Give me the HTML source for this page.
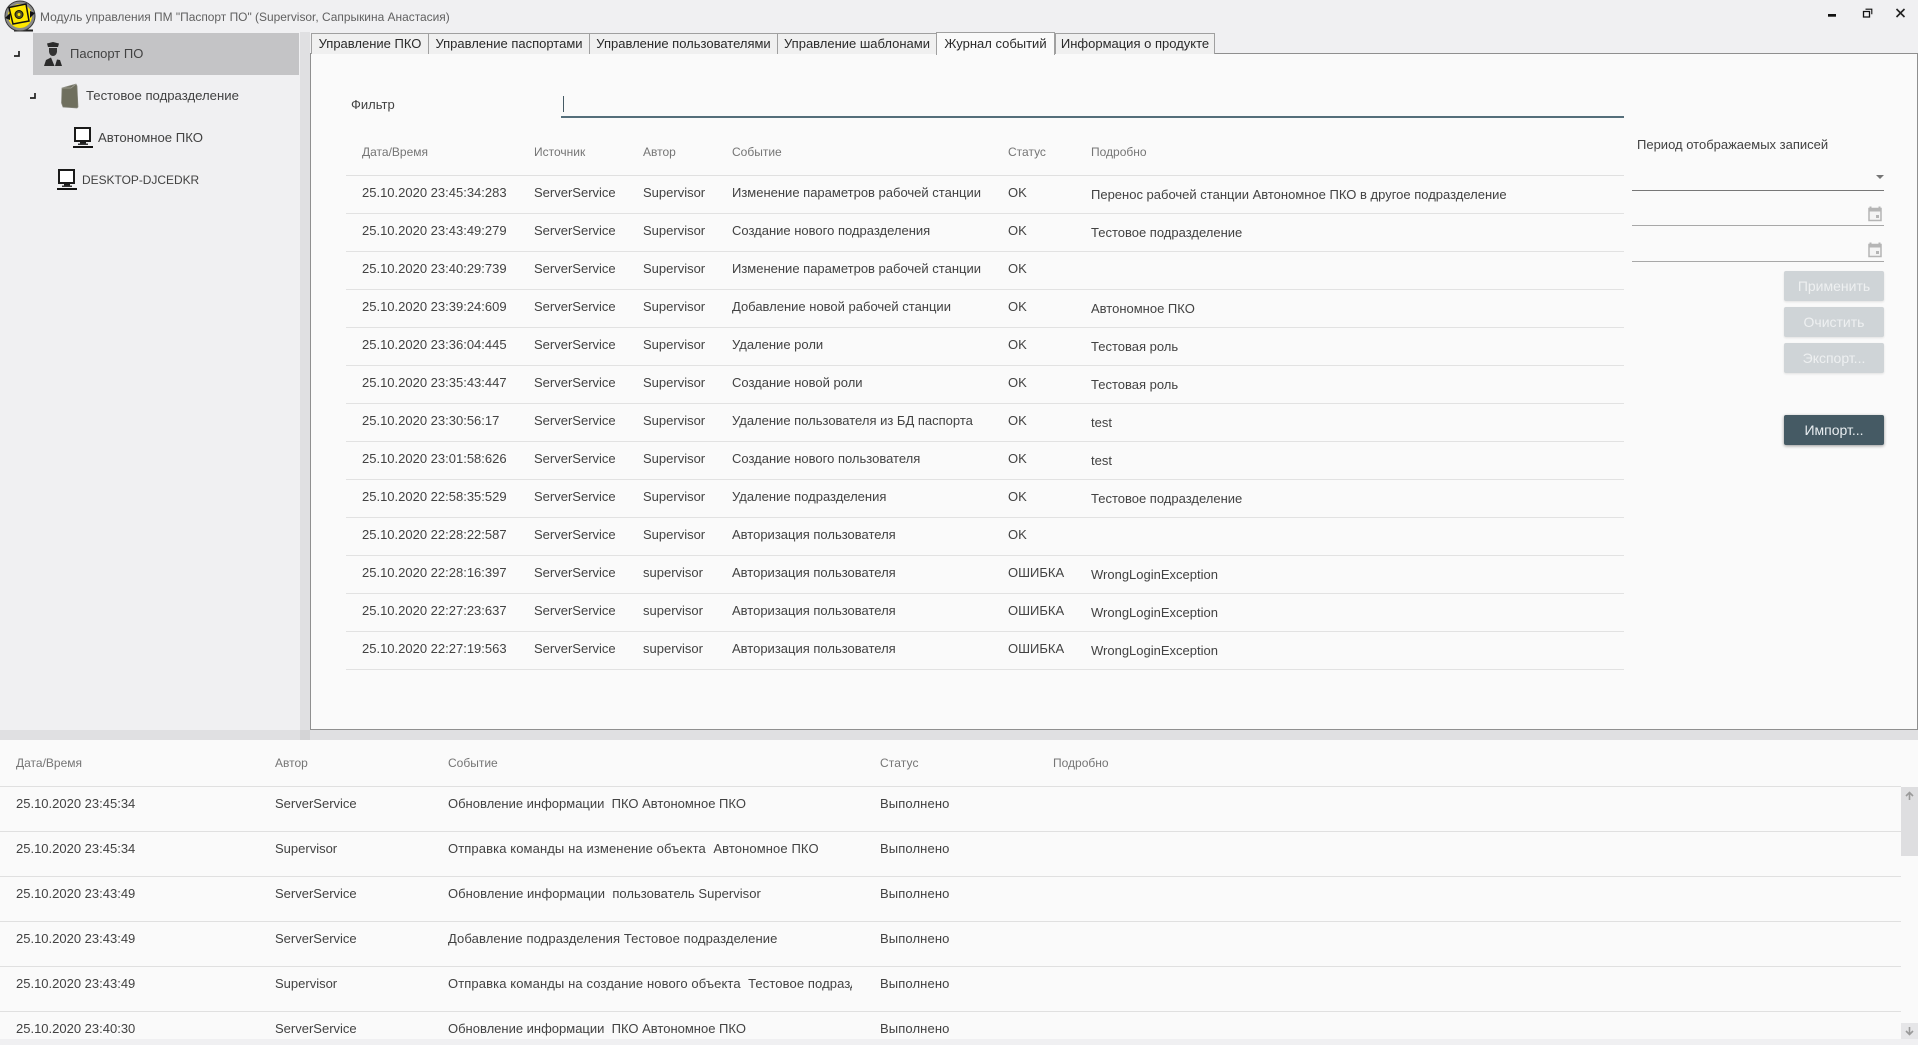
<!DOCTYPE html>
<html lang="ru"><head><meta charset="utf-8"><title>Паспорт ПО</title>
<style>
html,body{margin:0;padding:0}
body{width:1918px;height:1045px;position:relative;overflow:hidden;background:#f0f0f2;font:13px "Liberation Sans",sans-serif;color:#424242}
.a{position:absolute;white-space:nowrap}
.title{left:40px;top:9px;line-height:16px;font-size:11.95px;color:#616161}
.sel{left:33px;top:33px;width:266px;height:42px;background:#c4c4c6}
.tree{font-size:13px;line-height:16px;color:#424242}
.vs{left:300px;top:32px;width:10px;height:698px;background:#e0e0e2}
.hs{left:0;top:730px;width:1918px;height:10px;background:#e0e0e2}
.jn{left:300px;top:730px;width:10px;height:10px;background:#d4d4d6}
.panel{left:310px;top:53px;width:1606px;height:675px;background:#fafafa;border:1px solid #8f8f8f}
.tab{top:33px;height:20px;line-height:19px;text-align:center;background:#f0f0f0;border:1px solid #a0a0a0;border-bottom:0;box-sizing:content-box;font-size:13px;color:#2a2a2a}
.tab.on{top:32px;height:22px;line-height:21px;background:#fafafa;z-index:2}
.r,.h{position:absolute;left:346px;width:1278px;height:38px;border-bottom:1px solid #e2e2e2;box-sizing:border-box}
.r span,.h span,.br span,.bh span{position:absolute;white-space:nowrap;line-height:16px}
.r span{top:9px}
.h{top:130px;height:46px;border-bottom:1px solid #e0e0e0}
.h span{top:14px;font-size:12px;color:#757575}
.c1{left:16px}.c2{left:188px}.c3{left:297px}.c4{left:386px}.c5{left:662px}
.r .c6{left:745px;top:11px}
.h .c6{left:745px}
.bh,.br{position:absolute;left:0;width:1901px;background:#fafafa;box-sizing:border-box;border-bottom:1px solid #e0e0e0}
.bwrap{left:0;top:740px;width:1918px;height:299px;background:#fafafa;overflow:hidden}
.bh{top:0;height:47px}
.bh span{top:15px;font-size:12px;color:#757575}
.br{height:45px}
.br span{top:9px}
.d1{left:16px}.d2{left:275px}.d3{left:448px;max-width:404px;overflow:hidden}.d4{left:880px;letter-spacing:.12px}.d5{left:1053px}
.ls{letter-spacing:.11px}
.btn{left:1784px;width:100px;height:30px;line-height:30px;text-align:center;background:#cfd4d7;color:#eef0f1;border-radius:2px;font-size:14px;box-shadow:0 1px 2px rgba(0,0,0,.1)}
.btn.dark{background:#455a64;color:#e8edf0;box-shadow:0 1px 3px rgba(0,0,0,.4)}
.ln{left:1632px;width:252px;height:1px;background:#a8a8a8}
</style></head><body>

<svg class="a" style="left:3px;top:0" width="34" height="34" viewBox="0 0 34 34">
<path d="M11 30.5 H30" stroke="#222" stroke-width="2"/>
<circle cx="17" cy="16" r="15" fill="#8a8a8a" stroke="#3a3a3a" stroke-width="1"/>
<circle cx="17" cy="16" r="12" fill="#ffe800"/>
<path d="M6 7.5 L23 4 L26 21 L10 24 Z" fill="#ffe800" stroke="#111" stroke-width="1.5"/>
<circle cx="16" cy="14.5" r="4" fill="#5a5a20" stroke="#111"/>
<circle cx="16" cy="14.5" r="1.5" fill="#ffe800"/>
<path d="M2 18 L7 13 L7 20 Z M32 13 L27 18 L27 11 Z" fill="#111"/>
</svg>
<div class="a title">Модуль управления ПМ "Паспорт ПО" (Supervisor, Сапрыкина Анастасия)</div>

<svg class="a" style="left:1826px;top:8px" width="84" height="16" viewBox="0 0 84 16">
<rect x="2" y="6" width="8" height="2.7" fill="#111"/>
<path d="M37.5 3.5 h6 v5.5 h-6 z" fill="none" stroke="#111" stroke-width="1.3"/>
<path d="M39.5 1.2 h6.3 v5" fill="none" stroke="#111" stroke-width="1.1"/>
<path d="M70.5 1 L78.5 9 M78.5 1 L70.5 9" stroke="#222" stroke-width="1.6"/>
</svg>

<div class="a sel"></div>
<svg class="a" style="left:13px;top:48px" width="8" height="10" viewBox="0 0 8 10"><path d="M1 8 H6 V3" fill="none" stroke="#222" stroke-width="1.7"/></svg>
<svg class="a" style="left:29px;top:90px" width="8" height="10" viewBox="0 0 8 10"><path d="M1 8 H6 V3" fill="none" stroke="#222" stroke-width="1.7"/></svg>
<svg class="a" style="left:43px;top:41px" width="20" height="26" viewBox="0 0 20 26">
<path d="M4 2.5 L10 1 L16 2.5 L15 6 H5 Z" fill="#2b2b2b"/>
<path d="M6 7 H14 V11 Q13 15 10 15 Q7 15 6 11 Z" fill="#333"/>
<path d="M1 25 L3 19 L8 16.5 L11.5 25 Z M12 25 L14 18.5 L17 19 L19 25 Z" fill="#2b2b2b"/>
</svg>
<svg class="a" style="left:60px;top:83px" width="20" height="26" viewBox="0 0 20 26">
<path d="M2 5 L16 1 L17 3 L18 24 L17 25 L3 24 L1.5 20 Z" fill="#6f6f5e" stroke="#85857a" stroke-width=".7"/>
<path d="M2 5 L11 5 L16 1" fill="none" stroke="#a5a59a" stroke-width=".8"/>
</svg>
<svg class="a" style="left:73px;top:127px" width="20" height="22" viewBox="0 0 20 22"><use href="#pc"/></svg>
<svg class="a" style="left:57px;top:169px" width="20" height="22" viewBox="0 0 20 22">
<g id="pc"><rect x="2" y="1" width="15" height="13" fill="#fff" stroke="#1a1a1a" stroke-width="2"/><rect x="7" y="15" width="6" height="2" fill="#1a1a1a"/><rect x="5" y="16.5" width="10" height="1.5" fill="#333"/><rect x="0" y="19" width="20" height="2" fill="#111"/></g>
</svg>

<div class="a tree" style="left:70px;top:46px">Паспорт ПО</div>
<div class="a tree" style="left:86px;top:88px;font-size:13.15px">Тестовое подразделение</div>
<div class="a tree" style="left:98px;top:130px;font-size:13.15px">Автономное ПКО</div>
<div class="a tree" style="left:82px;top:172px;font-size:11.95px">DESKTOP-DJCEDKR</div>

<div class="a vs"></div><div class="a hs"></div><div class="a jn"></div>
<div class="a panel"></div>

<div class="a tab" style="left:311px;width:116px">Управление ПКО</div>
<div class="a tab" style="left:428px;width:160px">Управление паспортами</div>
<div class="a tab" style="left:589px;width:187px">Управление пользователями</div>
<div class="a tab" style="left:777px;width:158px">Управление шаблонами</div>
<div class="a tab on" style="left:936px;width:117px">Журнал событий</div>
<div class="a tab" style="left:1055px;width:158px">Информация о продукте</div>

<div class="a" style="left:351px;top:97px;line-height:16px;color:#424242">Фильтр</div>
<div class="a" style="left:563px;top:96px;width:1px;height:16px;background:#455a64"></div>
<div class="a" style="left:561px;top:116px;width:1063px;height:2px;background:#546e7a"></div>

<div class="h"><span class="c1">Дата/Время</span><span class="c2">Источник</span><span class="c3">Автор</span><span class="c4">Событие</span><span class="c5">Статус</span><span class="c6">Подробно</span></div>
<div class="r" style="top:176px"><span class="c1">25.10.2020 23:45:34:283</span><span class="c2">ServerService</span><span class="c3">Supervisor</span><span class="c4">Изменение параметров рабочей станции</span><span class="c5">OK</span><span class="c6">Перенос рабочей станции Автономное ПКО в другое подразделение</span></div>
<div class="r" style="top:214px"><span class="c1">25.10.2020 23:43:49:279</span><span class="c2">ServerService</span><span class="c3">Supervisor</span><span class="c4">Создание нового подразделения</span><span class="c5">OK</span><span class="c6">Тестовое подразделение</span></div>
<div class="r" style="top:252px"><span class="c1">25.10.2020 23:40:29:739</span><span class="c2">ServerService</span><span class="c3">Supervisor</span><span class="c4">Изменение параметров рабочей станции</span><span class="c5">OK</span></div>
<div class="r" style="top:290px"><span class="c1">25.10.2020 23:39:24:609</span><span class="c2">ServerService</span><span class="c3">Supervisor</span><span class="c4">Добавление новой рабочей станции</span><span class="c5">OK</span><span class="c6">Автономное ПКО</span></div>
<div class="r" style="top:328px"><span class="c1">25.10.2020 23:36:04:445</span><span class="c2">ServerService</span><span class="c3">Supervisor</span><span class="c4">Удаление роли</span><span class="c5">OK</span><span class="c6">Тестовая роль</span></div>
<div class="r" style="top:366px"><span class="c1">25.10.2020 23:35:43:447</span><span class="c2">ServerService</span><span class="c3">Supervisor</span><span class="c4">Создание новой роли</span><span class="c5">OK</span><span class="c6">Тестовая роль</span></div>
<div class="r" style="top:404px"><span class="c1">25.10.2020 23:30:56:17</span><span class="c2">ServerService</span><span class="c3">Supervisor</span><span class="c4">Удаление пользователя из БД паспорта</span><span class="c5">OK</span><span class="c6">test</span></div>
<div class="r" style="top:442px"><span class="c1">25.10.2020 23:01:58:626</span><span class="c2">ServerService</span><span class="c3">Supervisor</span><span class="c4">Создание нового пользователя</span><span class="c5">OK</span><span class="c6">test</span></div>
<div class="r" style="top:480px"><span class="c1">25.10.2020 22:58:35:529</span><span class="c2">ServerService</span><span class="c3">Supervisor</span><span class="c4">Удаление подразделения</span><span class="c5">OK</span><span class="c6">Тестовое подразделение</span></div>
<div class="r" style="top:518px"><span class="c1">25.10.2020 22:28:22:587</span><span class="c2">ServerService</span><span class="c3">Supervisor</span><span class="c4">Авторизация пользователя</span><span class="c5">OK</span></div>
<div class="r" style="top:556px"><span class="c1">25.10.2020 22:28:16:397</span><span class="c2">ServerService</span><span class="c3">supervisor</span><span class="c4">Авторизация пользователя</span><span class="c5">ОШИБКА</span><span class="c6">WrongLoginException</span></div>
<div class="r" style="top:594px"><span class="c1">25.10.2020 22:27:23:637</span><span class="c2">ServerService</span><span class="c3">supervisor</span><span class="c4">Авторизация пользователя</span><span class="c5">ОШИБКА</span><span class="c6">WrongLoginException</span></div>
<div class="r" style="top:632px"><span class="c1">25.10.2020 22:27:19:563</span><span class="c2">ServerService</span><span class="c3">supervisor</span><span class="c4">Авторизация пользователя</span><span class="c5">ОШИБКА</span><span class="c6">WrongLoginException</span></div>

<div class="a" style="left:1637px;top:137px;line-height:16px;font-size:13px;color:#424242">Период отображаемых записей</div>
<div class="a ln" style="top:190px;background:#777"></div>
<svg class="a" style="left:1876px;top:174px" width="8" height="6" viewBox="0 0 8 6"><path d="M0 1 H8 L4 5 Z" fill="#757575"/></svg>
<div class="a ln" style="top:225px"></div>
<div class="a ln" style="top:261px"></div>
<svg class="a" style="left:1868px;top:206px" width="15" height="16" viewBox="0 0 15 16"><path d="M2.5 0.5 V3 M11.5 0.5 V3" stroke="#b5b5b5" stroke-width="2"/><rect x="1" y="2.5" width="12" height="12" fill="#f4f4f4" stroke="#b5b5b5" stroke-width="1.5"/><rect x="1" y="2.5" width="12" height="3" fill="#b5b5b5"/><rect x="8" y="9" width="3" height="3" fill="#b5b5b5"/></svg>
<svg class="a" style="left:1868px;top:242px" width="15" height="16" viewBox="0 0 15 16"><path d="M2.5 0.5 V3 M11.5 0.5 V3" stroke="#b5b5b5" stroke-width="2"/><rect x="1" y="2.5" width="12" height="12" fill="#f4f4f4" stroke="#b5b5b5" stroke-width="1.5"/><rect x="1" y="2.5" width="12" height="3" fill="#b5b5b5"/><rect x="8" y="9" width="3" height="3" fill="#b5b5b5"/></svg>
<div class="a btn" style="top:271px">Применить</div>
<div class="a btn" style="top:307px">Очистить</div>
<div class="a btn" style="top:343px">Экспорт...</div>
<div class="a btn dark" style="top:415px">Импорт...</div>

<div class="a bwrap">
<div class="bh"><span class="d1">Дата/Время</span><span class="d2">Автор</span><span class="d3">Событие</span><span class="d4">Статус</span><span class="d5">Подробно</span></div>
<div class="br" style="top:47px"><span class="d1">25.10.2020 23:45:34</span><span class="d2">ServerService</span><span class="d3">Обновление информации&nbsp; ПКО Автономное ПКО</span><span class="d4">Выполнено</span></div>
<div class="br" style="top:92px"><span class="d1">25.10.2020 23:45:34</span><span class="d2">Supervisor</span><span class="d3 ls">Отправка команды на изменение объекта&nbsp; Автономное ПКО</span><span class="d4">Выполнено</span></div>
<div class="br" style="top:137px"><span class="d1">25.10.2020 23:43:49</span><span class="d2">ServerService</span><span class="d3" style="letter-spacing:.03px">Обновление информации&nbsp; пользователь Supervisor</span><span class="d4">Выполнено</span></div>
<div class="br" style="top:182px"><span class="d1">25.10.2020 23:43:49</span><span class="d2">ServerService</span><span class="d3 ls">Добавление подразделения Тестовое подразделение</span><span class="d4">Выполнено</span></div>
<div class="br" style="top:227px"><span class="d1">25.10.2020 23:43:49</span><span class="d2">Supervisor</span><span class="d3 ls">Отправка команды на создание нового объекта&nbsp; Тестовое подразделение</span><span class="d4">Выполнено</span></div>
<div class="br" style="top:272px;border:0;height:27px"><span class="d1">25.10.2020 23:40:30</span><span class="d2">ServerService</span><span class="d3">Обновление информации&nbsp; ПКО Автономное ПКО</span><span class="d4">Выполнено</span></div>
<div class="a" style="left:1901px;top:47px;width:17px;height:69px;background:#dedee0"></div>
<div class="a" style="left:1901px;top:283px;width:17px;height:16px;background:#e6e6e8"></div>
<svg class="a" style="left:1905px;top:51px" width="9" height="10" viewBox="0 0 9 10"><path d="M4.5 9 V2 M1 5 L4.5 1.5 L8 5" fill="none" stroke="#9a9a9a" stroke-width="1.6"/></svg>
<svg class="a" style="left:1905px;top:286px" width="9" height="10" viewBox="0 0 9 10"><path d="M4.5 1 V8 M1 5 L4.5 8.5 L8 5" fill="none" stroke="#9a9a9a" stroke-width="1.6"/></svg>
</div>
</body></html>
